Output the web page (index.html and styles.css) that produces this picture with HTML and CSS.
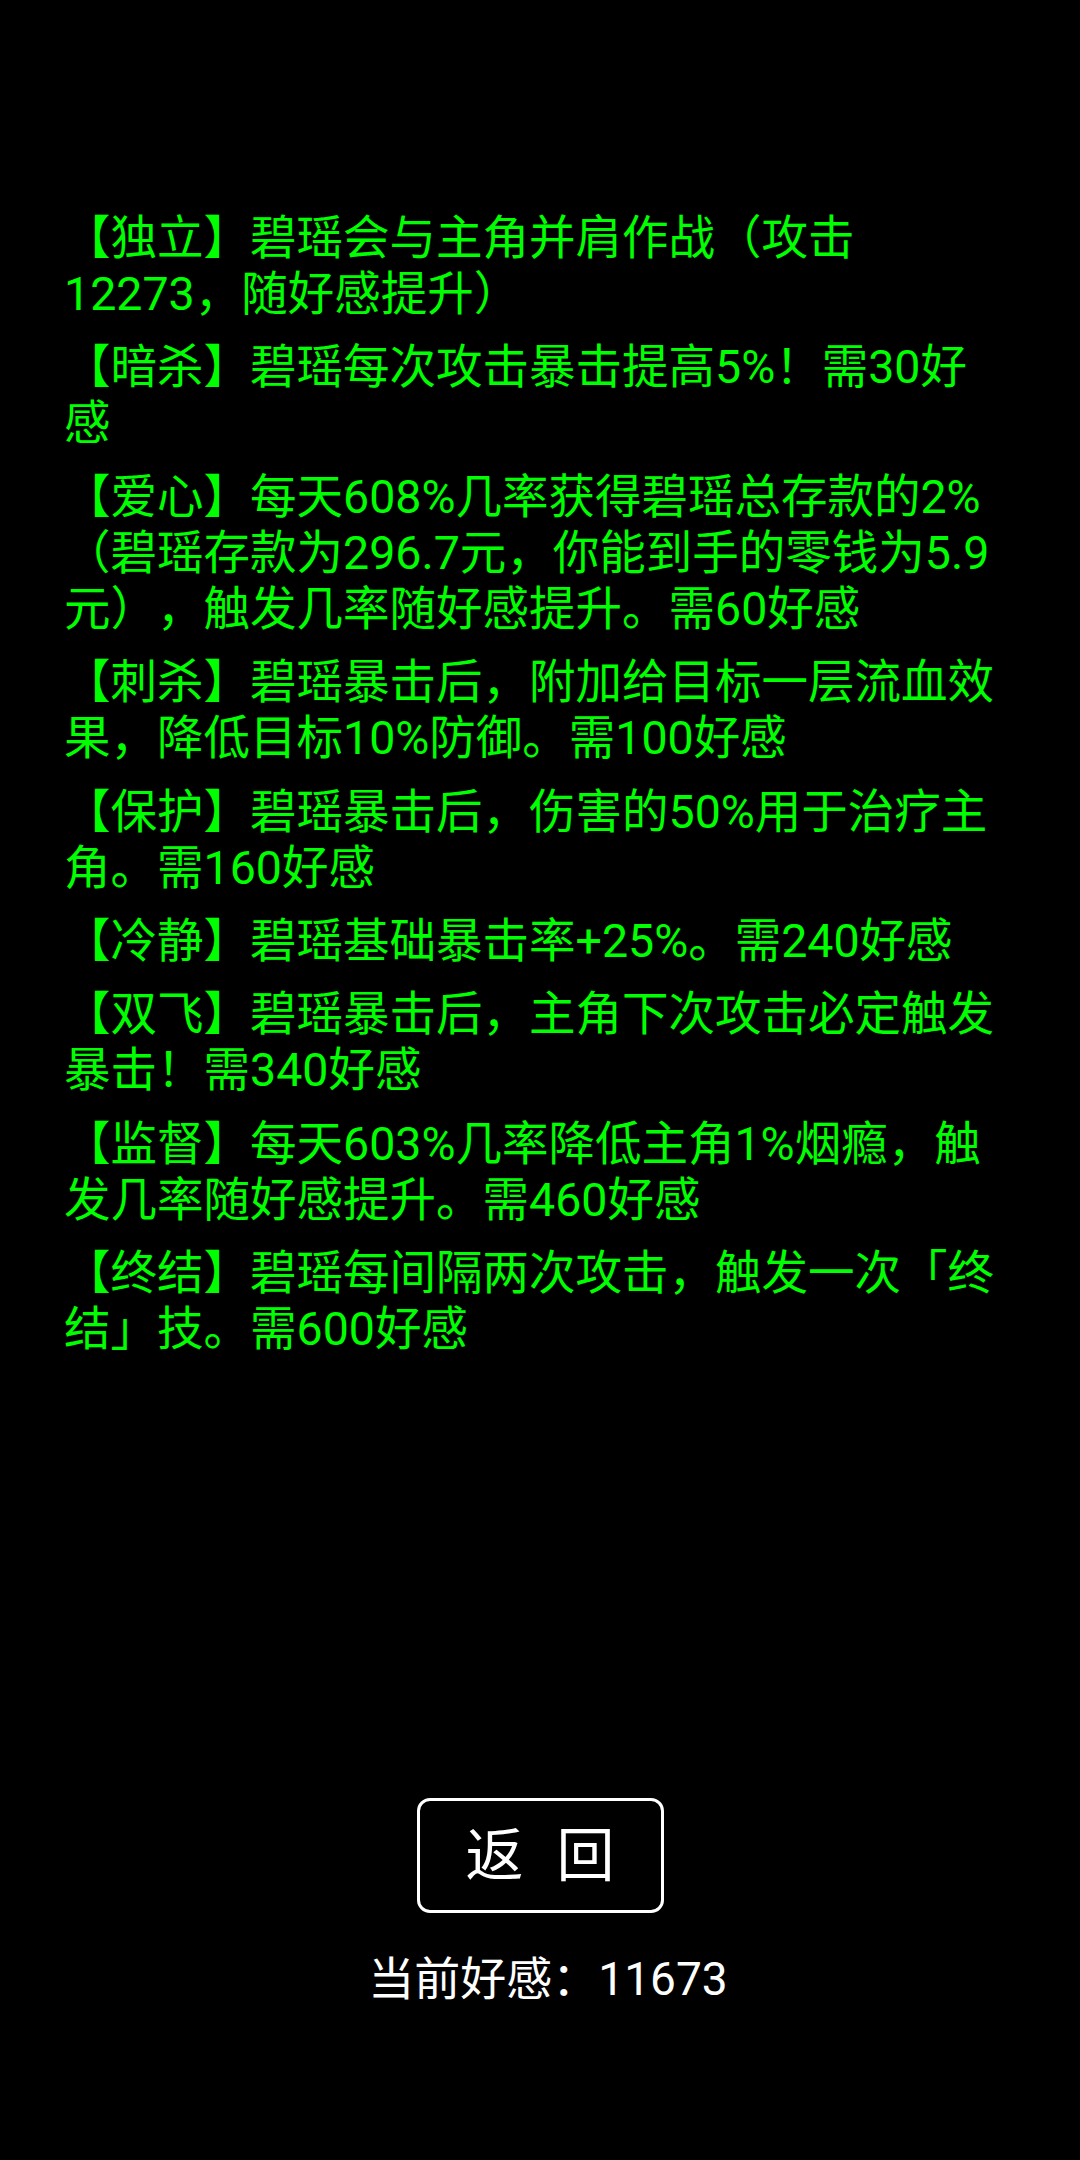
FILE: index.html
```html
<!DOCTYPE html>
<html lang="zh-CN">
<head>
<meta charset="utf-8">
<title>好感</title>
<link rel="stylesheet" href="styles.css">
</head>
<body>
<div class="screen">
  <div class="list">
    <p class="item">【独立】碧瑶会与主角并肩作战（攻击12273，随好感提升）</p>
    <p class="item">【暗杀】碧瑶每次攻击暴击提高5%！需30好感</p>
    <p class="item">【爱心】每天608%几率获得碧瑶总存款的2%（碧瑶存款为296.7元，你能到手的零钱为5.9元），触发几率随好感提升。需60好感</p>
    <p class="item">【刺杀】碧瑶暴击后，附加给目标一层流血效果，降低目标10%防御。需100好感</p>
    <p class="item">【保护】碧瑶暴击后，伤害的50%用于治疗主角。需160好感</p>
    <p class="item">【冷静】碧瑶基础暴击率+25%。需240好感</p>
    <p class="item">【双飞】碧瑶暴击后，主角下次攻击必定触发暴击！需340好感</p>
    <p class="item">【监督】每天603%几率降低主角1%烟瘾，触发几率随好感提升。需460好感</p>
    <p class="item">【终结】碧瑶每间隔两次攻击，触发一次「终结」技。需600好感</p>
  </div>
  <div class="footer">
    <button class="back"><span>返</span><span>回</span></button>
    <div class="favor">当前好感：11673</div>
  </div>
</div>
</body>
</html>
```

FILE: styles.css
```css
html, body {
  margin: 0;
  padding: 0;
  background: #000;
}

.screen {
  width: 1080px;
  height: 2160px;
  box-sizing: border-box;
  padding-top: 210px;
  padding-bottom: 153px;
  display: flex;
  flex-direction: column;
  font-family: Roboto, "Noto Sans CJK SC", sans-serif;
  text-spacing-trim: space-all;
}

.list {
  padding: 0 75px 0 64px;
}

.item {
  margin: 0 0 17.4px 0;
  color: #00ff00;
  font-size: 46.5px;
  line-height: 56px;
  text-spacing-trim: space-all;
}

.footer {
  margin-top: auto;
  display: flex;
  flex-direction: column;
  align-items: center;
}

.back {
  width: 247px;
  height: 115px;
  box-sizing: border-box;
  border: 3.5px solid #fff;
  border-radius: 13px;
  background: #000;
  color: #fff;
  font-family: Roboto, "Noto Sans CJK SC", sans-serif;
  font-size: 58px;
  line-height: 1;
  padding: 0;
  display: flex;
  align-items: center;
  justify-content: center;
  gap: 33px;
}

.favor {
  margin-top: 38px;
  padding-left: 16px;
  color: #fff;
  font-size: 46px;
  line-height: 56px;
  text-spacing-trim: space-all;
}
```
